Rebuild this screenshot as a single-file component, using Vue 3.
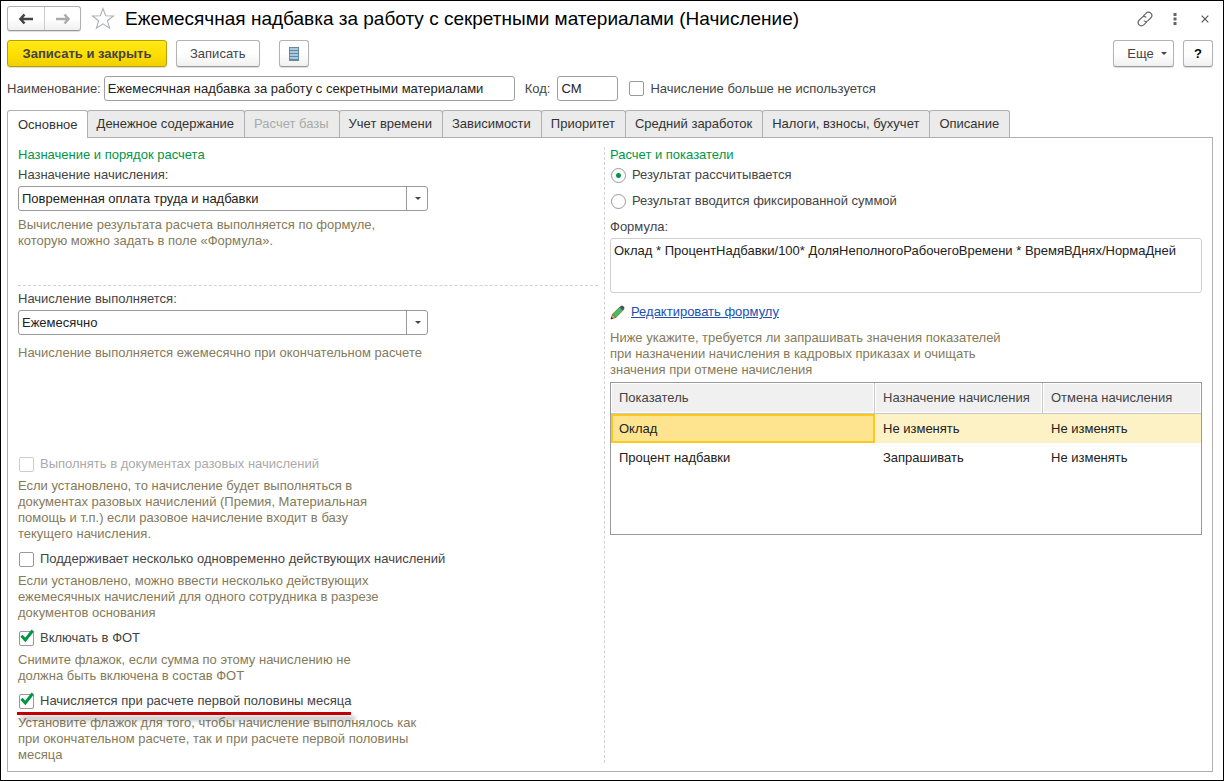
<script setup>
import { ref } from 'vue'

const tabs = [
  { id: 'main', title: 'Основное' },
  { id: 'money', title: 'Денежное содержание' },
  { id: 'base', title: 'Расчет базы', disabled: true },
  { id: 'time', title: 'Учет времени' },
  { id: 'deps', title: 'Зависимости' },
  { id: 'priority', title: 'Приоритет' },
  { id: 'average', title: 'Средний заработок' },
  { id: 'taxes', title: 'Налоги, взносы, бухучет' },
  { id: 'about', title: 'Описание' },
]
const activeTab = ref('main')

const name = ref('Ежемесячная надбавка за работу с секретными материалами')
const code = ref('СМ')
const unused = ref(false)
const purpose = ref('Повременная оплата труда и надбавки')
const schedule = ref('Ежемесячно')
const mode = ref('calc')
const formula = ref('Оклад * ПроцентНадбавки/100* ДоляНеполногоРабочегоВремени * ВремяВДнях/НормаДней')

const flags = ref([
  {
    id: 'single',
    title: 'Выполнять в документах разовых начислений',
    checked: false,
    disabled: true,
    hint: ['Если установлено, то начисление будет выполняться в', 'документах разовых начислений (Премия, Материальная', 'помощь и т.п.) если разовое начисление входит в базу', 'текущего начисления.'],
  },
  {
    id: 'multiple',
    title: 'Поддерживает несколько одновременно действующих начислений',
    checked: false,
    hint: ['Если установлено, можно ввести несколько действующих', 'ежемесячных начислений для одного сотрудника в разрезе', 'документов основания'],
  },
  {
    id: 'fot',
    title: 'Включать в ФОТ',
    checked: true,
    hint: ['Снимите флажок, если сумма по этому начислению не', 'должна быть включена в состав ФОТ'],
  },
  {
    id: 'half',
    title: 'Начисляется при расчете первой половины месяца',
    checked: true,
    marked: true,
    hint: ['Установите флажок для того, чтобы начисление выполнялось как', 'при окончательном расчете, так и при расчете первой половины', 'месяца'],
  },
])

const rows = [
  ['Оклад', 'Не изменять', 'Не изменять'],
  ['Процент надбавки', 'Запрашивать', 'Не изменять'],
]
const selectedRow = ref(0)
</script>

<template>
  <main class="window">
    <header class="titlebar">
      <div class="nav">
        <button type="button" aria-label="Назад">
          <svg width="16" height="12" viewBox="0 0 16 12"><path d="M6.500 1.500 2.500 6l4 4.500M3 6h12" fill="none" stroke="#444" stroke-width="2.600" /></svg>
        </button>
        <button type="button" aria-label="Вперед">
          <svg width="16" height="12" viewBox="0 0 16 12"><path d="M9.500 1.500 13.500 6l-4 4.500M13 6H1" fill="none" stroke="#aaa" stroke-width="2.400" /></svg>
        </button>
      </div>
      <button type="button" class="plain star" aria-label="В избранное">
        <svg width="24" height="23" viewBox="0 0 24 23"><path d="M12 1.500 14.700 8.700 22.500 9 16.400 13.800 18.600 21.200 12 16.900 5.400 21.200 7.600 13.800 1.500 9 9.300 8.700Z" fill="#fff" stroke="#a9b0b6" stroke-width="1.100" /></svg>
      </button>
      <h1>Ежемесячная надбавка за работу с секретными материалами (Начисление)</h1>
      <div class="window-tools">
        <button type="button" class="plain" aria-label="Получить ссылку">
          <svg width="16" height="16" viewBox="0 0 16 16"><g fill="none" stroke="#666" stroke-width="1.200" stroke-linecap="round"><path d="M6.500 4.800 9 2.300C10.300 1 12.300 .7 13.800 2.200s1.200 3.500-.1 4.800L11 9.600C9.800 10.700 8.200 10.700 7.200 9.900" /><path d="M9.500 11.200 7 13.700C5.700 15 3.700 15.300 2.200 13.800S1 10.300 2.300 9L5 6.400C6.200 5.300 7.800 5.300 8.800 6.100" /></g></svg>
        </button>
        <button type="button" class="plain" aria-label="Меню окна">
          <svg width="4" height="12" viewBox="0 0 4 12"><path d="M.5 0h3v3h-3zM.5 4.500h3v3h-3zM.5 9h3v3h-3z" fill="#666" /></svg>
        </button>
        <button type="button" class="plain" aria-label="Закрыть">
          <svg width="8" height="8" viewBox="0 0 8 8"><path d="M.7.7l6.600 6.600M7.300.7.7 7.300" stroke="#555" stroke-width="1.200" /></svg>
        </button>
      </div>
    </header>

    <div class="toolbar">
      <button type="button" class="btn primary">Записать и закрыть</button>
      <button type="button" class="btn">Записать</button>
      <button type="button" class="btn square list" aria-label="Список">
        <svg width="10" height="14" viewBox="0 0 10 14"><path d="M0 0h10v14H0z" fill="#6489a3" /><path d="M1 1h8v2H1zM1 4h8v2H1zM1 7h8v2H1zM1 10h8v2H1z" fill="#a9c9de" /></svg>
      </button>
      <span class="spacer"></span>
      <button type="button" class="btn more">Еще
        <svg width="6" height="3" viewBox="0 0 6 3"><path d="M0 0h6L3 3z" fill="#444" /></svg>
      </button>
      <button type="button" class="btn square help">?</button>
    </div>

    <div class="identity">
      <label for="name">Наименование:</label>
      <input id="name" v-model="name" type="text" class="field name" />
      <label for="code">Код:</label>
      <input id="code" v-model="code" type="text" class="field code" />
      <label class="check">
        <input v-model="unused" type="checkbox" />
        <span>Начисление больше не используется</span>
      </label>
    </div>

    <div class="tabs" role="tablist">
      <button
        v-for="tab in tabs"
        :key="tab.id"
        type="button"
        role="tab"
        class="tab"
        :class="{ active: tab.id === activeTab }"
        :aria-selected="tab.id === activeTab"
        :disabled="tab.disabled"
        @click="activeTab = tab.id"
      >{{ tab.title }}</button>
    </div>

    <div class="panel" role="tabpanel">
      <section class="left">
        <h2>Назначение и порядок расчета</h2>
        <label class="caption" for="purpose">Назначение начисления:</label>
        <div class="combo">
          <select id="purpose" v-model="purpose"><option>Повременная оплата труда и надбавки</option></select>
          <span class="arrow"><svg width="6" height="3" viewBox="0 0 6 3"><path d="M0 0h6L3 3z" fill="#444" /></svg></span>
        </div>
        <p class="hint purpose-hint">Вычисление результата расчета выполняется по формуле,<br />которую можно задать в поле «Формула».</p>
        <hr />
        <label class="caption" for="schedule">Начисление выполняется:</label>
        <div class="combo">
          <select id="schedule" v-model="schedule"><option>Ежемесячно</option></select>
          <span class="arrow"><svg width="6" height="3" viewBox="0 0 6 3"><path d="M0 0h6L3 3z" fill="#444" /></svg></span>
        </div>
        <p class="hint schedule-hint">Начисление выполняется ежемесячно при окончательном расчете</p>

        <div class="flags">
          <div v-for="flag in flags" :key="flag.id" class="flag">
            <label class="check" :class="{ off: flag.disabled, marked: flag.marked }">
              <input v-model="flag.checked" type="checkbox" :disabled="flag.disabled" />
              <svg v-if="flag.checked" class="tick" width="16" height="15" viewBox="0 0 16 15"><path d="M2.500 6.800 6.300 11 13.800 1.500" fill="none" stroke="#009646" stroke-width="3" /></svg>
              <span>{{ flag.title }}</span>
            </label>
            <p class="hint"><template v-for="(line, i) in flag.hint" :key="i"><br v-if="i" />{{ line }}</template></p>
          </div>
        </div>
      </section>

      <section class="right">
        <h2>Расчет и показатели</h2>
        <div class="radios">
          <label class="check"><input v-model="mode" type="radio" name="mode" value="calc" /><span>Результат рассчитывается</span></label>
          <label class="check"><input v-model="mode" type="radio" name="mode" value="fixed" /><span>Результат вводится фиксированной суммой</span></label>
        </div>
        <label class="caption" for="formula">Формула:</label>
        <textarea id="formula" v-model="formula" spellcheck="false"></textarea>
        <div class="edit">
          <svg width="15" height="15" viewBox="0 0 15 15">
            <path d="M1 14 2.500 9.200 5.800 12.500z" fill="#e9ad5c" stroke="#6b5434" stroke-width=".7" />
            <path d="M.7 14.300 1.500 11.800 3.200 13.500z" fill="#333" />
            <path d="M2.500 9.200 9.500 2.200 12.800 5.500 5.800 12.500z" fill="#50b95d" stroke="#3e7548" stroke-width=".7" />
            <path d="M9.500 2.200 11 .7h1.800l1.500 1.500v1.800L12.800 5.500z" fill="#465364" />
          </svg>
          <a href="#formula">Редактировать формулу</a>
        </div>
        <p class="hint table-hint">Ниже укажите, требуется ли запрашивать значения показателей<br />при назначении начисления в кадровых приказах и очищать<br />значения при отмене начисления</p>
        <div class="grid">
          <table>
            <colgroup><col class="c1" /><col class="c2" /><col class="c3" /></colgroup>
            <thead>
              <tr><th scope="col">Показатель</th><th scope="col">Назначение начисления</th><th scope="col">Отмена начисления</th></tr>
            </thead>
            <tbody>
              <tr v-for="(row, r) in rows" :key="r" :class="{ selected: r === selectedRow }" @click="selectedRow = r">
                <td v-for="(cell, c) in row" :key="c">{{ cell }}</td>
              </tr>
            </tbody>
          </table>
        </div>
      </section>
    </div>
  </main>
</template>

<style>
body {
  background: #fff;
}
</style>

<style scoped>
.window,
.window * {
  box-sizing: border-box;
}

.window {
  display: flex;
  flex-direction: column;
  min-height: 100vh;
  padding: 5px 10px 8px 6px;
  border: 1px solid #000;
  background: #fff;
  color: #444;
  font: 13px/16px "Liberation Sans", Arial, sans-serif;
}

button,
input,
select,
textarea {
  font: inherit;
  color: inherit;
}

h1,
h2,
p {
  margin: 0;
  font-weight: normal;
}

svg {
  display: block;
  flex: none;
}

.titlebar {
  display: flex;
  align-items: center;
  height: 25px;
}

.nav {
  display: flex;
  height: 25px;
  border: 1px solid #b0b0b0;
  border-bottom-color: #999;
  border-radius: 3px;
  background: linear-gradient(#fff 50%, #f0f0f0);
  box-shadow: 0 1px 1px #ddd;
}

.nav button {
  display: flex;
  align-items: center;
  justify-content: center;
  width: 36px;
  padding: 0;
  border: 0;
  background: none;
}

.nav button + button {
  border-left: 1px solid #ccc;
}

.plain {
  display: flex;
  align-items: center;
  justify-content: center;
  padding: 0;
  border: 0;
  background: none;
}

.star {
  margin-left: 10px;
}

h1 {
  flex: 1;
  margin-left: 10px;
  color: #000;
  font-size: 19px;
  line-height: 24px;
  white-space: nowrap;
}

.window-tools {
  display: flex;
  align-items: center;
  gap: 14px;
}

.window-tools .plain {
  width: 16px;
  height: 16px;
}

.toolbar {
  display: flex;
  align-items: center;
  margin-top: 9px;
}

.btn {
  display: flex;
  align-items: center;
  justify-content: center;
  height: 27px;
  padding: 0 13px;
  border: 1px solid #b3b3b3;
  border-bottom-color: #999;
  border-radius: 3px;
  background: linear-gradient(#fff 50%, #f0f0f0);
  box-shadow: 0 1px 1px #ddd;
  white-space: nowrap;
}

.primary {
  width: 160px;
  margin-right: 9px;
  border-color: #b99d00;
  background: linear-gradient(#ffe91a, #ffdf00 50%, #f0d000);
  font-weight: bold;
}

.square {
  width: 30px;
  padding: 0;
}

.list {
  margin-left: 19px;
}

.spacer {
  flex: 1;
}

.more {
  gap: 7px;
  width: 61px;
  padding: 0 6px 0 13px;
}

.help {
  margin-left: 9px;
  color: #000;
  font-weight: bold;
}

.identity {
  display: flex;
  align-items: center;
  margin-top: 9px;
}

.field {
  height: 25px;
  padding: 0 3px;
  border: 1px solid #a0a0a0;
  border-radius: 3px;
  background: #fff;
  color: #222;
}

.name {
  width: 411px;
  margin: 0 10px 0 3px;
}

.code {
  width: 61px;
  margin: 0 11px 0 7px;
}

.check {
  display: flex;
  align-items: center;
  position: relative;
  height: 16px;
  white-space: nowrap;
}

.check input {
  flex: none;
  width: 15px;
  height: 15px;
  margin: 0 6px 0 1px;
  border: 1px solid #999;
  border-radius: 2px;
  background: #fff;
  appearance: none;
}

.check input[type="radio"] {
  border-radius: 50%;
}

.check input[type="radio"]:checked {
  background: radial-gradient(circle, #009646 2px, #fff 3px);
}

.identity .check input {
  margin-left: 0;
}

.tick {
  position: absolute;
  left: 1px;
  top: -1px;
  pointer-events: none;
}

.off {
  color: #aaa;
}

.check input:disabled {
  border-color: #ccc;
}

.tabs {
  display: flex;
  margin-top: 9px;
}

.tab {
  height: 27px;
  margin: 0 0 0 -1px;
  padding: 0 10px 0 9px;
  border: 1px solid #b0b0b0;
  border-bottom: 0;
  border-radius: 3px 3px 0 0;
  background: #ebebeb;
  color: #333;
  white-space: nowrap;
}

.tab:first-child {
  margin-left: 0;
  padding: 0 9px 0 10px;
}

.tab:disabled {
  color: #aaa;
}

.tab.active {
  position: relative;
  height: 28px;
  margin-bottom: -1px;
  background: #fff;
}

.panel {
  display: grid;
  grid-template-columns: 1fr 1fr;
  flex: 1;
  padding: 9px 10px 8px;
  border: 1px solid #b0b0b0;
}

.left {
  display: flex;
  flex-direction: column;
  margin-right: 5px;
  padding-right: 6px;
  border-right: 1px dashed #d2d2d2;
}

h2 {
  color: #009646;
  font-size: 13px;
  line-height: 16px;
}

.caption {
  display: block;
  margin-top: 4px;
}

.combo {
  position: relative;
  width: 410px;
  max-width: 100%;
  margin-top: 3px;
}

.combo select {
  display: block;
  width: 100%;
  height: 25px;
  padding: 0 24px 0 3px;
  border: 1px solid #999;
  border-radius: 3px;
  background: #fff;
  color: #222;
  appearance: none;
}

.arrow {
  display: flex;
  align-items: center;
  justify-content: center;
  position: absolute;
  top: 0;
  right: 0;
  bottom: 0;
  width: 22px;
  border-left: 1px solid #999;
  pointer-events: none;
}

.hint {
  color: #857a5a;
}

.purpose-hint {
  margin-top: 6px;
}

hr {
  align-self: stretch;
  margin: 36px 0 0;
  border: 0;
  border-top: 1px dashed #d2d2d2;
}

hr + .caption {
  margin-top: 5px;
}

.schedule-hint {
  margin-top: 10px;
}

.flags {
  display: flex;
  flex-direction: column;
  gap: 9px;
  margin-top: auto;
}

.flag {
  display: flex;
  flex-direction: column;
  align-items: flex-start;
  gap: 6px;
}

.marked::after {
  content: "";
  position: absolute;
  left: -1px;
  right: 0;
  top: 19px;
  height: 3px;
  background: #c00000;
  box-shadow: 4px 5px 4px rgba(0, 0, 0, 0.35);
}

.right {
  min-width: 0;
}

.radios {
  display: flex;
  flex-direction: column;
  align-items: flex-start;
  gap: 10px;
  margin: 4px 0 10px;
}

.right .caption {
  margin-top: 0;
}

textarea {
  display: block;
  width: 100%;
  height: 55px;
  margin-top: 3px;
  padding: 4px 3px;
  border: 1px solid #d0d0d0;
  border-radius: 3px;
  background: #fff;
  color: #222;
  resize: none;
}

.edit {
  display: flex;
  align-items: center;
  gap: 6px;
  margin-top: 11px;
}

a {
  color: #1a4fb4;
}

.table-hint {
  margin-top: 10px;
}

.grid {
  height: 153px;
  margin-top: 4px;
  border: 1px solid #999;
}

table {
  width: 100%;
  border-collapse: separate;
  border-spacing: 0;
  table-layout: fixed;
}

.c1 {
  width: 264px;
}

.c2 {
  width: 168px;
}

th,
td {
  padding: 0 8px;
  text-align: left;
  white-space: nowrap;
}

th {
  height: 31px;
  border-right: 1px solid #c8c8c8;
  border-bottom: 1px solid #c8c8c8;
  background: #f0f0f0;
  box-shadow: inset 0 0 0 1px #fff;
  font-weight: normal;
}

th:last-child {
  border-right: 0;
}

td {
  height: 29px;
  color: #222;
}

.selected td {
  background: #fdf1c6;
}

.selected td:first-child {
  background: #ffe48f;
  box-shadow: inset 0 0 0 2px #fbc81e;
}
</style>
